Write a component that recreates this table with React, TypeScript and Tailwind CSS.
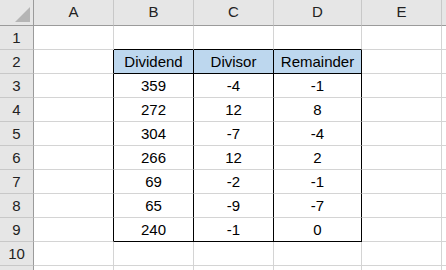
import React from "react";

const cols = ["A", "B", "C", "D", "E"];
const widths = ["w-[80px]", "w-[80px]", "w-[80px]", "w-[88px]", "w-[80px]"];

const data: [number, number, number][] = [
  [359, -4, -1],
  [272, 12, 8],
  [304, -7, -4],
  [266, 12, 2],
  [69, -2, -1],
  [65, -9, -7],
  [240, -1, 0],
];

const grid = "border-[#d4d4d4]";

const Cell = ({
  className = "",
  children,
}: {
  className?: string;
  children?: React.ReactNode;
}) => (
  <div
    className={`h-[24px] shrink-0 border-r border-b flex items-center justify-center pt-px text-[15px] text-black ${className}`}
  >
    {children}
  </div>
);

const RowHead = ({ n }: { n?: number }) => (
  <div className="w-[34px] h-[24px] shrink-0 bg-[#e6e6e6] border-r border-b border-r-[#9b9b9b] border-b-[#c8c8c8] flex items-center justify-center pt-px text-[15px] text-[#222]">
    {n}
  </div>
);

const App = () => {
  return (
    <div
      className="w-[446px] h-[270px] overflow-hidden bg-white"
      style={{ fontFamily: '"Liberation Sans", Arial, sans-serif' }}
    >
      {/* column headers */}
      <div className="flex">
        <div className="w-[34px] h-[26px] shrink-0 bg-[#e6e6e6] border-r border-b border-[#9b9b9b] flex">
          <svg width="33" height="25" viewBox="0 0 33 25">
            <polygon points="30,7 30,22 15,22" fill="#b5b5b5" />
          </svg>
        </div>
        {cols.map((c, i) => (
          <div
            key={c}
            className={`${widths[i]} h-[26px] shrink-0 bg-[#e6e6e6] border-r border-b border-r-[#c8c8c8] border-b-[#9b9b9b] flex items-center justify-center text-[15px] text-[#222]`}
          >
            {c}
          </div>
        ))}
        <div className="flex-1 h-[26px] bg-[#e6e6e6] border-b border-[#9b9b9b]" />
      </div>

      {/* row 1 */}
      <div className="flex">
        <RowHead n={1} />
        <Cell className={`w-[80px] ${grid}`} />
        <Cell className="w-[80px] border-r-[#d4d4d4] border-b-black" />
        <Cell className="w-[80px] border-r-[#d4d4d4] border-b-black" />
        <Cell className="w-[88px] border-r-[#d4d4d4] border-b-black" />
        <Cell className={`w-[80px] ${grid}`} />
        <div className="flex-1 h-[24px] border-b border-[#d4d4d4]" />
      </div>

      {/* row 2: table header */}
      <div className="flex">
        <RowHead n={2} />
        <Cell className="w-[80px] border-r-black border-b-[#d4d4d4]" />
        <Cell className="w-[80px] bg-[#bdd7ee] border-black">Dividend</Cell>
        <Cell className="w-[80px] bg-[#bdd7ee] border-black">Divisor</Cell>
        <Cell className="w-[88px] bg-[#bdd7ee] border-black">Remainder</Cell>
        <Cell className={`w-[80px] ${grid}`} />
        <div className="flex-1 h-[24px] border-b border-[#d4d4d4]" />
      </div>

      {data.map(([a, b, r], i) => {
        const last = i === data.length - 1;
        const bottom = last ? "border-b-black" : "border-b-[#d4d4d4]";
        return (
          <div key={i} className="flex">
            <RowHead n={i + 3} />
            <Cell className="w-[80px] border-r-black border-b-[#d4d4d4]" />
            <Cell className={`w-[80px] border-r-black ${bottom}`}>{a}</Cell>
            <Cell className={`w-[80px] border-r-black ${bottom}`}>{b}</Cell>
            <Cell className={`w-[88px] border-r-black ${bottom}`}>{r}</Cell>
            <Cell className={`w-[80px] ${grid}`} />
            <div className="flex-1 h-[24px] border-b border-[#d4d4d4]" />
          </div>
        );
      })}

      {/* row 10 */}
      <div className="flex">
        <RowHead n={10} />
        <Cell className={`w-[80px] ${grid}`} />
        <Cell className={`w-[80px] ${grid}`} />
        <Cell className={`w-[80px] ${grid}`} />
        <Cell className={`w-[88px] ${grid}`} />
        <Cell className={`w-[80px] ${grid}`} />
        <div className="flex-1 h-[24px] border-b border-[#d4d4d4]" />
      </div>

      {/* next row, only its top edge shows */}
      <div className="flex">
        <RowHead />
        <Cell className={`w-[80px] ${grid}`} />
        <Cell className={`w-[80px] ${grid}`} />
        <Cell className={`w-[80px] ${grid}`} />
        <Cell className={`w-[88px] ${grid}`} />
        <Cell className={`w-[80px] ${grid}`} />
      </div>
    </div>
  );
};

export default App;
